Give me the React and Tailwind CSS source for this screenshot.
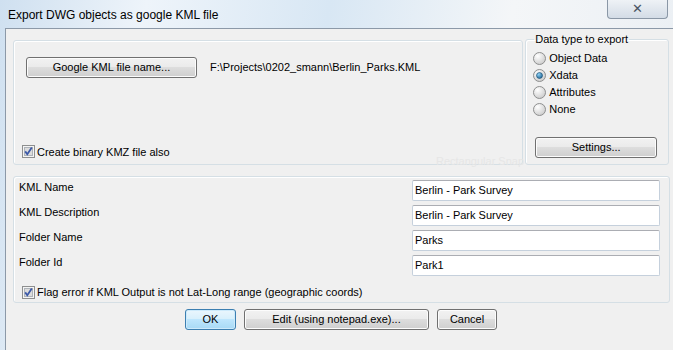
import React from 'react'

const font = { fontFamily: '"Liberation Sans", Arial, sans-serif' }

function Check(){
  return (
    <svg width="13" height="13" viewBox="0 0 13 13" className="shrink-0">
      <rect x="0.5" y="0.5" width="12" height="12" fill="#f4f4f4" stroke="#8e8f8f" />
      <rect x="2.5" y="2.5" width="8" height="8" fill="#dcdcdc" stroke="#aeb3b9" />
      <path d="M3.2 6.4 L5.3 9.3 L9.8 2.6" fill="none" stroke="#3c59a8" strokeWidth="1.8" />
    </svg>
  )
}

function Radio({on}){
  return (
    <svg width="13" height="13" viewBox="0 0 13 13" className="shrink-0">
      <defs>
        <radialGradient id="rg" cx="0.35" cy="0.3" r="0.8">
          <stop offset="0" stopColor="#ffffff" />
          <stop offset="1" stopColor="#c8c8c8" />
        </radialGradient>
        <radialGradient id="rd" cx="0.35" cy="0.3" r="0.8">
          <stop offset="0" stopColor="#8fd3f7" />
          <stop offset="1" stopColor="#1b5f8f" />
        </radialGradient>
      </defs>
      <circle cx="6.5" cy="6.5" r="6" fill="url(#rg)" stroke="#8e8f8f" />
      {on && <circle cx="6.5" cy="6.5" r="3" fill="url(#rd)" stroke="#15496e" strokeWidth="0.6" />}
    </svg>
  )
}

function Btn({children, w, def}){
  const base = 'flex h-[21px] items-center justify-center rounded-[3px] border text-[11px] text-black'
  const look = def
    ? 'border-[#3c7fb1] bg-[linear-gradient(#eaf6fd_0%,#d9f0fc_45%,#bee6fd_50%,#a7d9f5_100%)] shadow-[inset_0_0_0_1px_#cdeafb]'
    : 'border-[#707070] bg-[linear-gradient(#f2f2f2_0%,#ebebeb_45%,#dddddd_50%,#cfcfcf_100%)] shadow-[inset_0_0_0_1px_#fcfcfc]'
  return <div className={`${base} ${look}`} style={{width: w}}>{children}</div>
}

function Field({label, value}){
  return (
    <div className="flex h-[25px] items-start">
      <div className="w-[398px] pl-[5px] pt-[1px] text-[11px] leading-[13px] text-black">{label}</div>
      <div className="flex h-[21px] w-[248px] items-center rounded-[2px] border border-[#c5d0dc] border-t-[#abadb3] bg-white px-[2px] text-[11px] text-black">{value}</div>
    </div>
  )
}

export default function App(){
  return (
    <div className="flex h-[350px] w-[673px] flex-col overflow-hidden bg-[linear-gradient(100deg,#cfe0f0_0%,#eef4fa_20%,#d8e7f4_45%,#f4f6f8_70%,#e9eef3_100%)]" style={font}>
      <div className="flex h-[28px] shrink-0 items-start justify-between">
        <div className="pl-[8px] pt-[6px] text-[12px] text-black">Export DWG objects as google KML file</div>
        <div className="mr-[5px] flex h-[19px] w-[61px] items-center justify-center rounded-b-[4px] border border-t-0 border-[#8a97a6] bg-[linear-gradient(#eef2f6,#d3dce6)] text-[13px] text-[#4a5563]">✕</div>
      </div>
      <div className="ml-[5px] flex flex-1 flex-col border-l border-t border-[#8c99a8] bg-[#f0f0f0] pl-[7px] pr-[4px] pt-[3px]">
        <div className="flex h-[133px] gap-[2px]">
          <fieldset className="mt-[8px] flex w-[511px] flex-col rounded-[3px] border border-[#d5dfe5] shadow-[inset_1px_1px_0_#ffffff]">
            <div className="flex items-center pl-[12px] pt-[16px]">
              <Btn w={171}>Google KML file name...</Btn>
              <div className="pl-[13px] text-[11px] text-black">F:\Projects\0202_smann\Berlin_Parks.KML</div>
            </div>
            <div className="mt-auto flex items-center gap-[2px] pb-[4px] pl-[8px] text-[11px] text-black">
              <Check />
              <span>Create binary KMZ file also</span>
            </div>
          </fieldset>
          <fieldset className="flex w-[144px] flex-col rounded-[3px] border border-[#d5dfe5] px-[7px] shadow-[inset_1px_1px_0_#ffffff]">
            <legend className="ml-[1px] px-[1px] text-[11px] leading-[15px] text-black">Data type to export</legend>
            <div className="flex flex-col gap-[4px] pt-[5px]">
              {['Object Data', 'Xdata', 'Attributes', 'None'].map((t, i) => (
                <div key={t} className="flex h-[13px] items-center gap-[3px] text-[11px] text-black">
                  <Radio on={i === 1} />
                  <span>{t}</span>
                </div>
              ))}
            </div>
            <div className="mt-auto pb-[6px] pl-[2px]">
              <Btn w={122}>Settings...</Btn>
            </div>
          </fieldset>
        </div>
        <div className="relative h-[0px]">
          <div className="absolute left-[423px] top-[-12px] text-[11px] text-[#e6e6e6]">Rectangular Snap</div>
        </div>
        <div className="mt-[11px] flex h-[127px] w-[657px] flex-col rounded-[3px] border border-[#d5dfe5] pt-[3px] shadow-[inset_1px_1px_0_#ffffff]">
          <Field label="KML Name" value="Berlin - Park Survey" />
          <Field label="KML Description" value="Berlin - Park Survey" />
          <Field label="Folder Name" value="Parks" />
          <Field label="Folder Id" value="Park1" />
          <div className="mt-[4px] flex items-center gap-[2px] pl-[8px] text-[11px] text-black">
            <Check />
            <span>Flag error if KML Output is not Lat-Long range (geographic coords)</span>
          </div>
        </div>
        <div className="mt-[6px] flex gap-[8px] pl-[172px]">
          <Btn w={51} def>OK</Btn>
          <Btn w={185}>Edit (using notepad.exe)...</Btn>
          <Btn w={60}>Cancel</Btn>
        </div>
      </div>
    </div>
  )
}
